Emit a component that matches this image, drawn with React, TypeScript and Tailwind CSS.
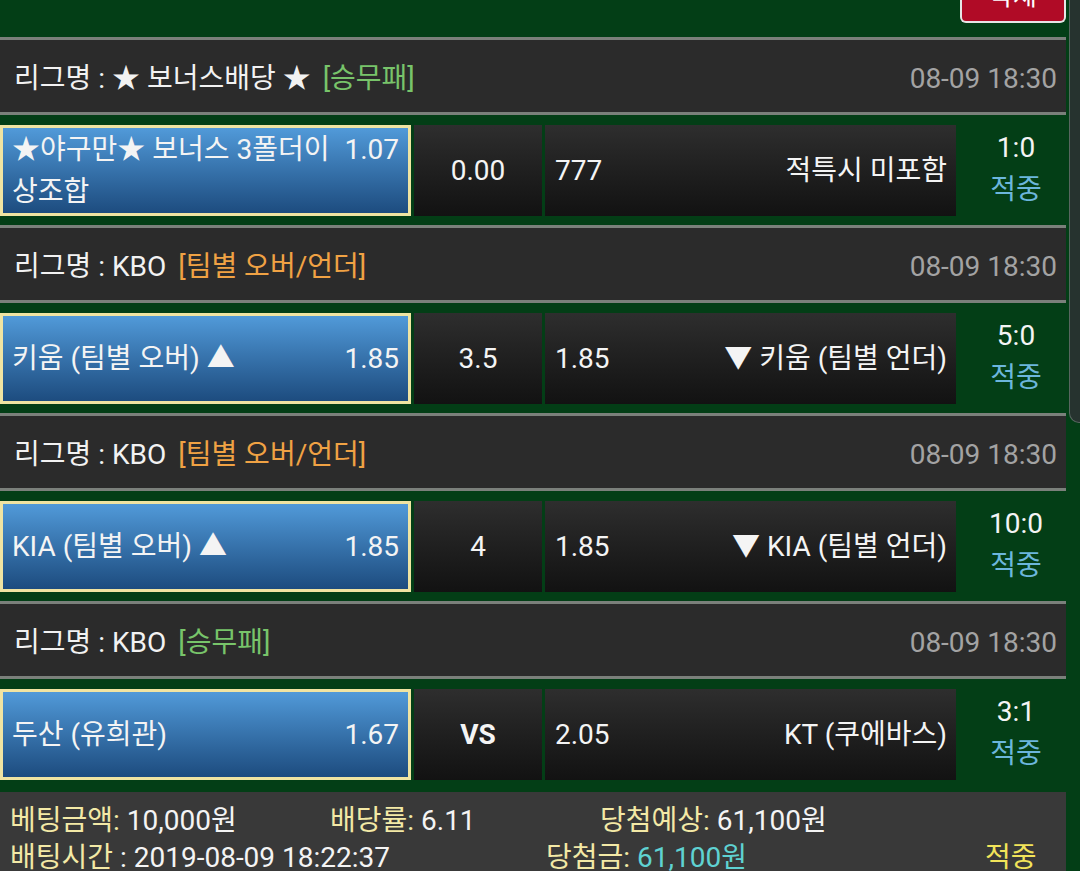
import React from "react";

type Bet = {
  league: string;
  tag: string;
  tagColor: "green" | "orange";
  date: string;
  home: string[];
  homeOdds: string;
  mid: string;
  midBold?: boolean;
  awayOdds: string;
  away: string;
  score: string;
};

const bets: Bet[] = [
  {
    league: "★ 보너스배당 ★",
    tag: "[승무패]",
    tagColor: "green",
    date: "08-09 18:30",
    home: ["★야구만★ 보너스 3폴더이", "상조합"],
    homeOdds: "1.07",
    mid: "0.00",
    awayOdds: "777",
    away: "적특시 미포함",
    score: "1:0",
  },
  {
    league: "KBO",
    tag: "[팀별 오버/언더]",
    tagColor: "orange",
    date: "08-09 18:30",
    home: ["키움 (팀별 오버) ▲"],
    homeOdds: "1.85",
    mid: "3.5",
    awayOdds: "1.85",
    away: "▼ 키움 (팀별 언더)",
    score: "5:0",
  },
  {
    league: "KBO",
    tag: "[팀별 오버/언더]",
    tagColor: "orange",
    date: "08-09 18:30",
    home: ["KIA (팀별 오버) ▲"],
    homeOdds: "1.85",
    mid: "4",
    awayOdds: "1.85",
    away: "▼ KIA (팀별 언더)",
    score: "10:0",
  },
  {
    league: "KBO",
    tag: "[승무패]",
    tagColor: "green",
    date: "08-09 18:30",
    home: ["두산 (유희관)"],
    homeOdds: "1.67",
    mid: "VS",
    midBold: true,
    awayOdds: "2.05",
    away: "KT (쿠에바스)",
    score: "3:1",
  },
];

function BetGroup({ bet }: { bet: Bet }) {
  return (
    <div className="shrink-0 pb-[9px]">
      {/* League header */}
      <div className="h-[78px] border-y-[3px] border-[#7b807b] bg-[#2b2b2b] flex items-center justify-between pt-[5px] pl-[14px] pr-[9px] text-[28px]">
        <div className="flex items-center text-[#f2f2f2]">
          <span>리그명 : {bet.league}</span>
          <span className={bet.tagColor === "green" ? "ml-[12px] text-[#78c46a]" : "ml-[12px] text-[#f0a244]"}>
            {bet.tag}
          </span>
        </div>
        <span className="text-[#a3a3a3]">{bet.date}</span>
      </div>

      {/* Bet row */}
      <div className="mt-[10px] h-[91px] flex text-[28px] text-[#f4f4f4]">
        <div className="w-[411px] border-[3px] border-[#f0e4a2] bg-gradient-to-b from-[#519ad9] to-[#1d4c7f] flex items-center pl-[9px] pr-[9px]">
          {bet.home.length > 1 ? (
            <div className="flex-1 leading-[42px]">
              <div className="flex justify-between">
                <span>{bet.home[0]}</span>
                <span>{bet.homeOdds}</span>
              </div>
              <div>{bet.home[1]}</div>
            </div>
          ) : (
            <div className="flex-1 flex justify-between">
              <span>{bet.home[0]}</span>
              <span>{bet.homeOdds}</span>
            </div>
          )}
        </div>
        <div className="ml-[3px] w-[128px] bg-gradient-to-b from-[#2e2e2e] to-[#121212] flex items-center justify-center">
          <span className={bet.midBold ? "font-bold" : ""}>{bet.mid}</span>
        </div>
        <div className="ml-[3px] w-[411px] bg-gradient-to-b from-[#2e2e2e] to-[#121212] flex items-center justify-between pl-[10px] pr-[9px]">
          <span>{bet.awayOdds}</span>
          <span>{bet.away}</span>
        </div>
        <div className="flex-1 pl-[10px] flex flex-col items-center justify-center leading-[42px]">
          <span className="-mt-[4px]">{bet.score}</span>
          <span className="text-[#6cb6dc]">적중</span>
        </div>
      </div>
    </div>
  );
}

export default function App() {
  return (
    <div
      className="w-[1080px] h-[871px] overflow-hidden bg-[#033e16] flex"
      style={{ fontFamily: "Roboto, 'Noto Sans CJK KR', sans-serif" }}
    >
      <div className="w-[1066px] flex flex-col">
        {/* top bar with delete button */}
        <div className="shrink-0 h-[37px] flex justify-end">
          <div className="w-[106px] h-[23px] overflow-hidden rounded-b-[6px] border-x-2 border-b-2 border-[#e6e6e6] bg-[#b00b26] flex justify-center">
            <span className="text-[26px] text-white leading-none -mt-[17px]">삭제</span>
          </div>
        </div>

        {bets.map((bet, i) => (
          <BetGroup key={i} bet={bet} />
        ))}

        {/* Summary footer */}
        <div className="shrink-0 mt-[3px] h-[100px] bg-[#393939] pl-[10px] pt-[10px] text-[28px] text-[#f4f4f4] leading-[37px]">
          <div className="flex">
            <div className="w-[320px]">
              <span className="text-[#f3e9a6]">베팅금액:</span> 10,000원
            </div>
            <div className="w-[270px]">
              <span className="text-[#f3e9a6]">배당률:</span> 6.11
            </div>
            <div>
              <span className="text-[#f3e9a6]">당첨예상:</span> 61,100원
            </div>
          </div>
          <div className="flex">
            <div className="w-[536px]">
              <span className="text-[#f3e9a6]">배팅시간</span> : 2019-08-09 18:22:37
            </div>
            <div className="w-[439px]">
              <span className="text-[#f3e9a6]">당첨금:</span> <span className="text-[#5fd2d2]">61,100원</span>
            </div>
            <div className="text-[#f2e45a]">적중</div>
          </div>
        </div>
      </div>

      {/* right scroll rail */}
      <div className="flex-1 flex justify-end">
        <div className="w-[11px] h-[423px] bg-[#26332f] border-l border-b border-[#586660] rounded-bl-[10px]" />
      </div>
    </div>
  );
}
